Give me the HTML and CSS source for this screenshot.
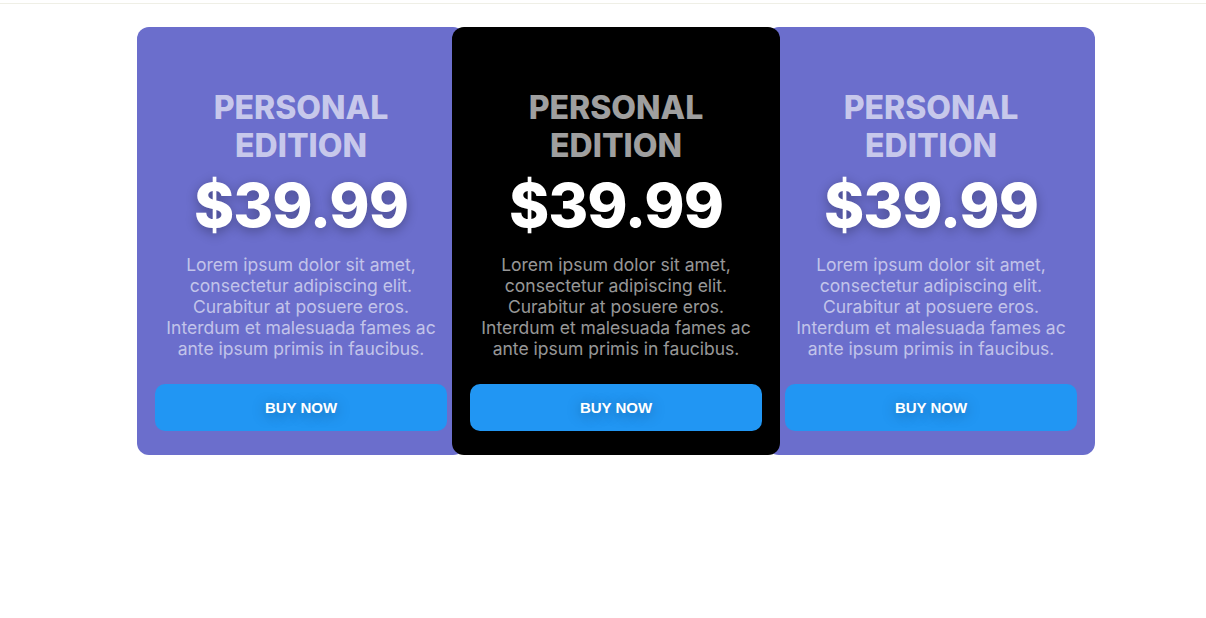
FILE: index.html
```html
<!DOCTYPE html>
<html lang="en">
<head>
<meta charset="utf-8">
<title>Pricing</title>
<link rel="stylesheet" href="styles.css">
</head>
<body>
<div class="topline"></div>
<main class="pricing">
  <section class="card">
    <h2 class="card-title">PERSONAL EDITION</h2>
    <div class="card-price">$39.99</div>
    <p class="card-text">Lorem ipsum dolor sit amet, consectetur adipiscing elit. Curabitur at posuere eros. Interdum et malesuada fames ac ante ipsum primis in faucibus.</p>
    <button class="card-btn">BUY NOW</button>
  </section>
  <section class="card card-dark">
    <h2 class="card-title">PERSONAL EDITION</h2>
    <div class="card-price">$39.99</div>
    <p class="card-text">Lorem ipsum dolor sit amet, consectetur adipiscing elit. Curabitur at posuere eros. Interdum et malesuada fames ac ante ipsum primis in faucibus.</p>
    <button class="card-btn">BUY NOW</button>
  </section>
  <section class="card">
    <h2 class="card-title">PERSONAL EDITION</h2>
    <div class="card-price">$39.99</div>
    <p class="card-text">Lorem ipsum dolor sit amet, consectetur adipiscing elit. Curabitur at posuere eros. Interdum et malesuada fames ac ante ipsum primis in faucibus.</p>
    <button class="card-btn">BUY NOW</button>
  </section>
</main>
</body>
</html>
```

FILE: styles.css
```css
* { box-sizing: border-box; }

html, body {
  margin: 0;
  padding: 0;
  background: #ffffff;
  font-family: Inter, "Noto Sans", sans-serif;
}

.topline {
  height: 4px;
  border-bottom: 1px solid #efefe6;
}

.pricing {
  display: flex;
  align-items: stretch;
  margin-top: 23px;
  padding-left: 137px;
}

.card {
  position: relative;
  width: 328px;
  flex: 0 0 328px;
  height: 428px;
  background: #6b6ecc;
  border-radius: 12px;
  padding: 62px 18px 24px;
  display: flex;
  flex-direction: column;
  align-items: center;
  text-align: center;
}

.card-dark {
  background: #000000;
  margin: 0 -13px;
  z-index: 2;
}

.card-title {
  margin: 0;
  font-size: 32px;
  line-height: 1.2;
  font-weight: 800;
  color: rgba(255, 255, 255, 0.63);
  width: 210px;
}

.card-price {
  margin-top: 0;
  font-size: 61px;
  font-weight: 800;
  line-height: 78px;
  color: #ffffff;
  letter-spacing: -1px;
  text-shadow: 0 3px 12px rgba(0, 0, 0, 0.3);
}

.card-text {
  margin: 10px 0 0;
  width: 284px;
  font-size: 17.5px;
  line-height: 21px;
  color: rgba(255, 255, 255, 0.6);
}

.card-btn {
  margin-top: auto;
  width: 100%;
  height: 47px;
  border: none;
  border-radius: 10px;
  background: #2196f3;
  color: #ffffff;
  font-family: "Liberation Sans", Arial, sans-serif;
  font-size: 15px;
  font-weight: 700;
  text-shadow: 0 2px 14px rgba(0, 0, 0, 0.35);
  cursor: pointer;
}
```
